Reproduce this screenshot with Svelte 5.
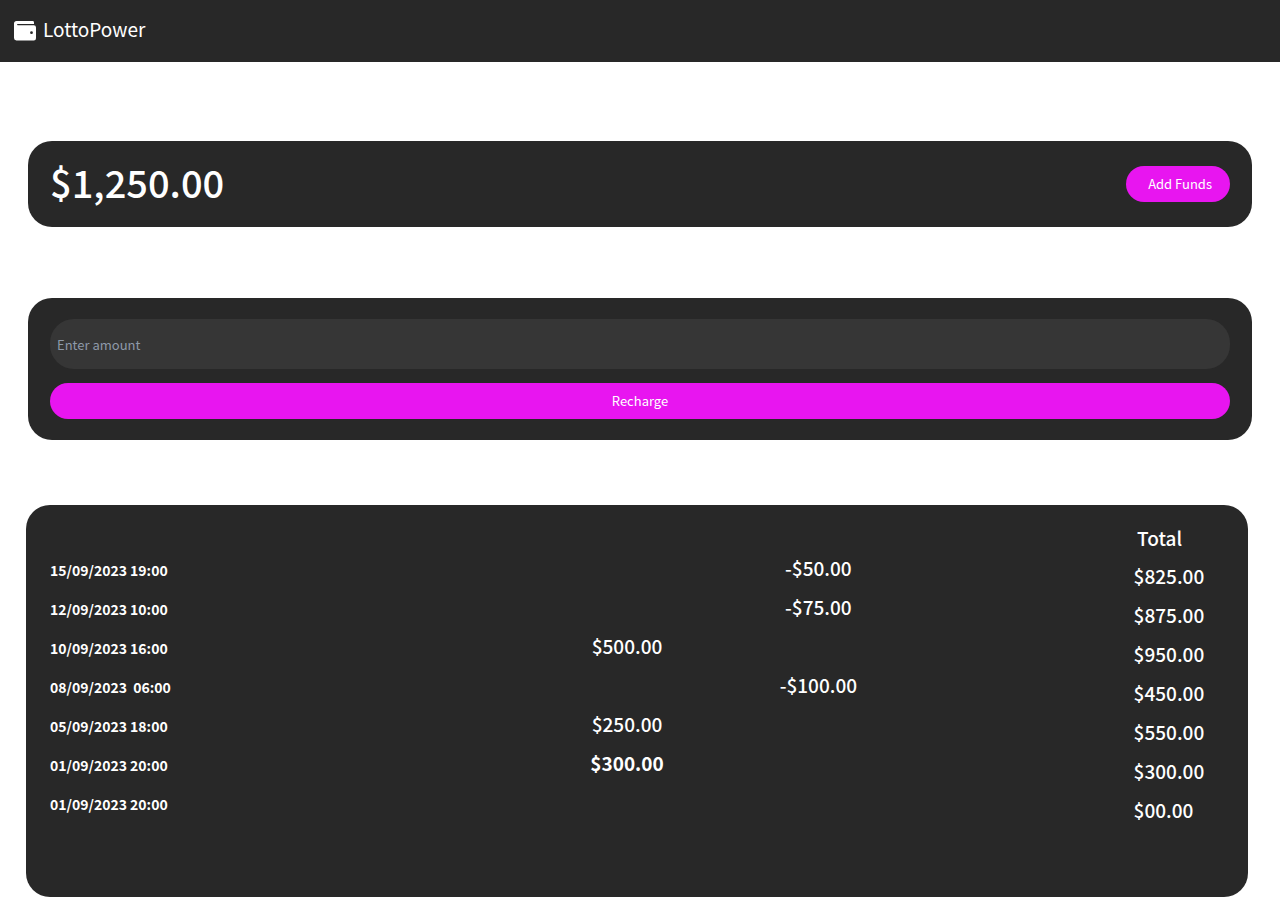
<script>
  let amount = $state('');

  const entries = [
    { date: '15/09/2023 19:00', credit: '', debit: '-$50.00', total: '$825.00' },
    { date: '12/09/2023 10:00', credit: '', debit: '-$75.00', total: '$875.00' },
    { date: '10/09/2023 16:00', credit: '$500.00', debit: '', total: '$950.00' },
    { date: '08/09/2023  06:00', credit: '', debit: '-$100.00', total: '$450.00' },
    { date: '05/09/2023 18:00', credit: '$250.00', debit: '', total: '$550.00' },
    { date: '01/09/2023 20:00', credit: '$300.00', debit: '', total: '$300.00', opening: true },
    { date: '01/09/2023 20:00', credit: '', debit: '', total: '$00.00' }
  ];
</script>

<header>
  <svg class="logo" viewBox="0 0 22 20" width="22" height="20" aria-hidden="true">
    <path
      fill="currentColor"
      fill-rule="evenodd"
      d="M2.6 0H18.6Q20 0 20 1.4V3H3.8Q3 3 3 3.6Q3 4.2 3.8 4.2H19.8Q22 4.2 22 6.4V17.3Q22 19.5 19.8 19.5H2.4Q0 19.5 0 17.1V2.6Q0 0 2.6 0ZM17.5 10.3A1.4 1.4 0 1 0 17.5 13.1A1.4 1.4 0 1 0 17.5 10.3Z"
    />
  </svg>
  <span class="brand">LottoPower</span>
</header>

<main>
  <section class="card balance">
    <h1>$1,250.00</h1>
    <button class="add" type="button">Add Funds</button>
  </section>

  <form class="card recharge" onsubmit={(e) => e.preventDefault()}>
    <input type="text" inputmode="decimal" placeholder="Enter amount" aria-label="Enter amount" bind:value={amount} />
    <button type="submit">Recharge</button>
  </form>

  <section class="card history">
    <table>
      <colgroup>
        <col class="c-date" />
        <col class="c-amount" />
        <col class="c-amount" />
        <col />
      </colgroup>
      <thead>
        <tr>
          <td></td>
          <td></td>
          <td></td>
          <th scope="col">Total</th>
        </tr>
      </thead>
      <tbody>
        {#each entries as entry}
          <tr>
            <td class="date">{entry.date}</td>
            <td class="amount" class:opening={entry.opening}>{entry.credit}</td>
            <td class="amount">{entry.debit}</td>
            <td class="total">{entry.total}</td>
          </tr>
        {/each}
      </tbody>
    </table>
  </section>
</main>

<style>
  :global(body) {
    margin: 0;
    background: #fff;
    font-family: 'Noto Sans CJK SC', 'Noto Sans', sans-serif;
    color: #fff;
  }

  header {
    display: flex;
    align-items: center;
    gap: 7px;
    height: 62px;
    padding: 0 14px;
    box-sizing: border-box;
    background: #282828;
  }

  .logo {
    display: block;
  }

  .brand {
    font-size: 19px;
    line-height: 28px;
    padding-bottom: 4px;
  }

  .card {
    box-sizing: border-box;
    margin: 0 28px;
    background: #282828;
    border-radius: 24px;
  }

  .balance {
    display: flex;
    align-items: center;
    justify-content: space-between;
    margin-top: 79px;
    padding: 16px 22px 20px;
  }

  h1 {
    margin: 0;
    font-size: 38px;
    line-height: 50px;
    font-weight: 500;
  }

  button {
    height: 36px;
    border: 0;
    border-radius: 18px;
    background: #e815f0;
    color: #fff;
    font: inherit;
    font-size: 13px;
    line-height: 20px;
    cursor: pointer;
  }

  .add {
    margin-top: 4px;
    padding: 0 18px 0 22px;
  }

  .recharge {
    display: flex;
    flex-direction: column;
    gap: 14px;
    margin-top: 71px;
    padding: 21px 22px;
  }

  input {
    height: 50px;
    box-sizing: border-box;
    padding: 0 7px;
    border: 0;
    border-radius: 24px;
    background: #363636;
    color: #fff;
    font: inherit;
    font-size: 13px;
  }

  input::placeholder {
    color: #8e99a9;
    opacity: 1;
  }

  .history {
    margin: 65px 32px 6px 26px;
    padding: 15px 24px 70px;
  }

  table {
    width: 100%;
    table-layout: fixed;
    border-collapse: collapse;
  }

  .c-date {
    width: 41%;
  }

  .c-amount {
    width: 16.3%;
  }

  td,
  th {
    box-sizing: border-box;
    height: 39px;
    padding: 0;
    text-align: left;
    vertical-align: top;
    font-size: 19px;
    line-height: 28px;
    font-weight: 500;
  }

  thead td,
  thead th {
    height: 34px;
  }

  th {
    padding-top: 4px;
    padding-left: 19%;
  }

  .date {
    padding-top: 2px;
    font-size: 14px;
    font-weight: 700;
    white-space: pre;
  }

  .amount {
    text-align: center;
  }

  .opening {
    font-weight: 700;
  }

  .total {
    padding-top: 8px;
    padding-left: 18.7%;
  }
</style>
